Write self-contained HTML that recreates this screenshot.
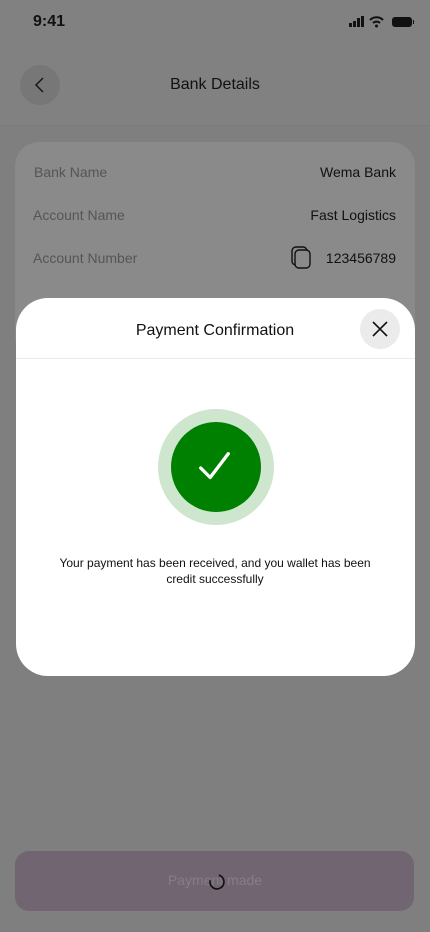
<!DOCTYPE html>
<html><head><style>
body{margin:0;width:430px;height:932px;background:#7f7f7f;font-family:"Liberation Sans",sans-serif;position:relative;overflow:hidden}
.abs{position:absolute}
</style></head><body>
<div class="abs" style="left:0;top:0;width:430px;height:125px;background:#818181;border-bottom:1px solid #7a7a7a"></div>
<div class="abs" style="left:33px;top:13px;font-size:16px;font-weight:bold;color:#111">9:41</div>
<svg class="abs" style="left:348px;top:15px" width="66" height="14" viewBox="0 0 66 14">
<rect x="1" y="8" width="3" height="4" fill="#111"/><rect x="5" y="6" width="3" height="6" fill="#111"/><rect x="9" y="3" width="3" height="9" fill="#111"/><rect x="13" y="1" width="3" height="11" fill="#111"/>
<path d="M22 5a9 9 0 0 1 13 0M25 8a5 5 0 0 1 7 0" stroke="#111" stroke-width="2" fill="none"/><circle cx="28.5" cy="11" r="1.5" fill="#111"/>
<rect x="44" y="2" width="20" height="10" rx="3" fill="#111"/><rect x="65" y="5" width="1.5" height="4" fill="#111"/></svg>
<div class="abs" style="left:20px;top:65px;width:40px;height:40px;border-radius:50%;background:#777"></div>
<svg class="abs" style="left:30px;top:75px" width="20" height="20"><path d="M13 3L6 10l7 7" stroke="#111" stroke-width="1.4" fill="none"/></svg>
<div class="abs" style="left:0;width:430px;top:76px;text-align:center;font-size:16px;color:#111">Bank Details</div>
<div class="abs" style="left:15px;top:142px;width:400px;height:220px;border-radius:24px;background:#8a8a8a"></div>
<div class="abs" style="left:34px;top:164px;font-size:14px;color:#555">Bank Name</div>
<div class="abs" style="right:34px;top:164px;font-size:14px;color:#111">Wema Bank</div>
<div class="abs" style="left:33px;top:207px;font-size:14px;color:#555">Account Name</div>
<div class="abs" style="right:34px;top:207px;font-size:14px;color:#111">Fast Logistics</div>
<div class="abs" style="left:33px;top:250px;font-size:14px;color:#555">Account Number</div>
<svg class="abs" style="left:291px;top:246px" width="22" height="24"><rect x="1" y="1" width="15" height="18" rx="4" stroke="#111" stroke-width="1.4" fill="none"/><rect x="4" y="4" width="15" height="18" rx="4" stroke="#111" stroke-width="1.4" fill="#8a8a8a"/></svg>
<div class="abs" style="right:34px;top:250px;font-size:14px;color:#111">123456789</div>
<div class="abs" style="left:16px;top:298px;width:399px;height:378px;border-radius:32px;background:#fff"></div>
<div class="abs" style="left:16px;top:358px;width:399px;height:1px;background:#ebebeb"></div>
<div class="abs" style="left:0;width:430px;top:322px;text-align:center;font-size:16px;color:#111">Payment Confirmation</div>
<div class="abs" style="left:360px;top:309px;width:40px;height:40px;border-radius:50%;background:#ebebeb"></div>
<svg class="abs" style="left:370px;top:319px" width="20" height="20"><path d="M3 3l14 14M17 3L3 17" stroke="#111" stroke-width="1.6"/></svg>
<div class="abs" style="left:158px;top:409px;width:116px;height:116px;border-radius:50%;background:#cde6cd"></div>
<div class="abs" style="left:171px;top:422px;width:90px;height:90px;border-radius:50%;background:#008000"></div>
<svg class="abs" style="left:195px;top:447px" width="40" height="40"><path d="M6 20l10 10L35 5" stroke="#fff" stroke-width="3.5" fill="none" stroke-linecap="round" stroke-linejoin="round" transform="translate(0,2) scale(.95)"/></svg>
<div class="abs" style="left:50px;width:330px;top:555px;text-align:center;font-size:12px;line-height:16px;color:#111">Your payment has been received, and you wallet has been credit successfully</div>
<div class="abs" style="left:15px;top:851px;width:399px;height:60px;border-radius:14px;background:#716571"></div>
<div class="abs" style="left:0;width:430px;top:872px;text-align:center;font-size:14px;color:#857e85">Payment made</div>
<svg class="abs" style="left:206px;top:871px" width="22" height="22"><path d="M6 6a7 7 0 1 0 10 0" stroke="#111" stroke-width="1.6" fill="none" transform="rotate(-30 11 11)"/></svg>
</body></html>
